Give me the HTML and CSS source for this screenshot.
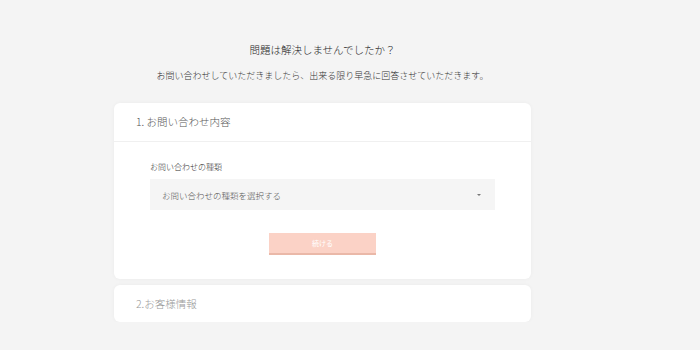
FILE: index.html
```html
<!DOCTYPE html>
<html lang="ja">
<head>
    <meta charset="UTF-8">
    <meta name="viewport" content="width=device-width, initial-scale=1.0">
    <title>お問い合わせ</title>
    <link rel="stylesheet" href="styles.css">
</head>
<body>
    <!-- 見出し -->
    <div class="intro">
        <p class="intro-title">問題は解決しませんでしたか？</p>
        <p class="intro-text">お問い合わせしていただきましたら、出来る限り早急に回答させていただきます。</p>
    </div>

    <!-- ステップ1 -->
    <div class="card">
        <div class="card-header">1. お問い合わせ内容</div>
        <div class="card-body">
            <div class="field-label">お問い合わせの種類</div>
            <div class="select">
                <span>お問い合わせの種類を選択する</span>
                <span class="select-arrow"></span>
            </div>
            <div class="actions">
                <button class="next-button">続ける</button>
            </div>
        </div>
    </div>

    <!-- ステップ2 -->
    <div class="card card-muted">
        <div class="card-header">2.お客様情報</div>
    </div>
</body>
</html>
```

FILE: styles.css
```css
/* 基本 */
body {
    margin: 0;
    padding: 40px 0 0 114px;
    font-family: "Noto Sans CJK JP", "Noto Sans", sans-serif;
    font-weight: 300;
    background-color: #f4f4f4;
    color: #333;
}

.intro {
    width: 417px;
    text-align: center;
}

.intro p {
    margin: 0;
    line-height: 20px;
}

.intro-title {
    font-size: 10.5px;
    color: #222;
}

.intro-text {
    margin-top: 6px !important;
    font-size: 9px;
    color: #333;
}

.card {
    width: 417px;
    margin-top: 17px;
    background-color: #fff;
    border-radius: 6px;
    box-shadow: 0 0 4px rgba(0, 0, 0, 0.04);
}

.card-header {
    height: 38px;
    line-height: 38px;
    padding-left: 22px;
    font-size: 10.5px;
    color: #555;
    border-bottom: 1px solid #f0f0f0;
}

.card-body {
    padding: 19px 36px 24px;
}

.field-label {
    font-size: 8px;
    line-height: 12px;
    color: #333;
}

.select {
    display: flex;
    align-items: center;
    justify-content: space-between;
    height: 31px;
    margin-top: 6px;
    padding: 0 14px 0 12px;
    background-color: #f5f5f5;
    font-size: 8.5px;
    color: #555;
}

.select-arrow {
    width: 0;
    height: 0;
    border-left: 2px solid transparent;
    border-right: 2px solid transparent;
    border-top: 2px solid #777;
}

.actions {
    display: flex;
    justify-content: center;
    margin-top: 23px;
}

.next-button {
    width: 107px;
    height: 22px;
    padding: 0;
    border: none;
    border-bottom: 2px solid #eab8a8;
    background-color: #fbd2c6;
    color: #fff;
    font-family: inherit;
    font-size: 7px;
    cursor: pointer;
}

.card-muted {
    margin-top: 6px;
}

.card-muted .card-header {
    height: 37px;
    line-height: 37px;
    font-size: 10.5px;
    color: #999;
    border-bottom: none;
}
```
